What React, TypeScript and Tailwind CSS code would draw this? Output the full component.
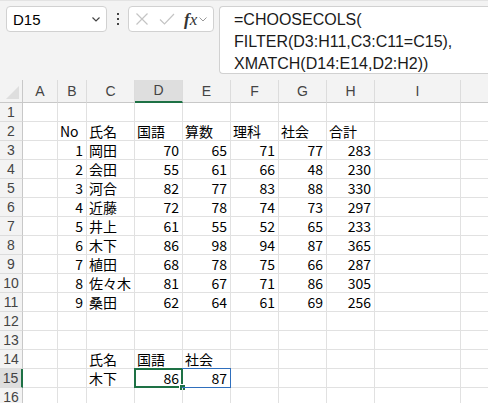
import React from "react";

const cols = ["A", "B", "C", "D", "E", "F", "G", "H", "I", ""];
const widths = [35, 29, 48, 48, 48, 48, 48, 48, 86, 40];

type Cell = { v: string; a?: "l" | "r" };
const rows: Record<number, Record<number, Cell>> = {};
const data: [string, string, number, number, number, number, number][] = [
  ["1", "岡田", 70, 65, 71, 77, 283],
  ["2", "会田", 55, 61, 66, 48, 230],
  ["3", "河合", 82, 77, 83, 88, 330],
  ["4", "近藤", 72, 78, 74, 73, 297],
  ["5", "井上", 61, 55, 52, 65, 233],
  ["6", "木下", 86, 98, 94, 87, 365],
  ["7", "植田", 68, 78, 75, 66, 287],
  ["8", "佐々木", 81, 67, 71, 86, 305],
  ["9", "桑田", 62, 64, 61, 69, 256],
];
rows[2] = {
  1: { v: "No" },
  2: { v: "氏名" },
  3: { v: "国語" },
  4: { v: "算数" },
  5: { v: "理科" },
  6: { v: "社会" },
  7: { v: "合計" },
};
data.forEach((d, i) => {
  rows[3 + i] = {
    1: { v: d[0], a: "r" },
    2: { v: d[1] },
    3: { v: String(d[2]), a: "r" },
    4: { v: String(d[3]), a: "r" },
    5: { v: String(d[4]), a: "r" },
    6: { v: String(d[5]), a: "r" },
    7: { v: String(d[6]), a: "r" },
  };
});
rows[14] = { 2: { v: "氏名" }, 3: { v: "国語" }, 4: { v: "社会" } };
rows[15] = { 2: { v: "木下" }, 3: { v: "86", a: "r" }, 4: { v: "87", a: "r" } };

const font = { fontFamily: '"Noto Sans CJK JP", "Liberation Sans", sans-serif' };

export default function App() {
  return (
    <div
      className="w-[488px] h-[403px] overflow-hidden bg-[#f3f3f3] text-black"
      style={font}
    >
      {/* formula bar */}
      <div className="h-[80px] border-t border-[#e3e3e3] flex items-start pt-[5px] pl-[6px] gap-0">
        <div className="w-[101px] h-[26px] bg-white border border-[#d1d1d1] rounded-[4px] flex items-center justify-between pl-[6px] pr-[4px]">
          <span className="text-[15px] leading-none" style={{ fontFamily: '"Liberation Sans", sans-serif' }}>D15</span>
          <svg width="12" height="12" viewBox="0 0 12 12">
            <path d="M2.5 4.5 L6 8 L9.5 4.5" fill="none" stroke="#444" strokeWidth="1.2" />
          </svg>
        </div>
        <div className="w-[21px] h-[26px] flex flex-col items-center justify-center gap-[3px]">
          <div className="w-[2px] h-[2px] bg-[#444]" />
          <div className="w-[2px] h-[2px] bg-[#444]" />
          <div className="w-[2px] h-[2px] bg-[#444]" />
        </div>
        <div className="w-[86px] h-[26px] bg-white border border-[#d1d1d1] rounded-[4px] flex items-center pl-[6px]">
          <svg width="14" height="14" viewBox="0 0 14 14">
            <path d="M1.5 1.5 L12.5 12.5 M12.5 1.5 L1.5 12.5" stroke="#c4c4c4" strokeWidth="1.2" />
          </svg>
          <svg width="16" height="14" viewBox="0 0 16 14" className="ml-[10px]">
            <path d="M1 7.5 L5.5 12 L15 2" fill="none" stroke="#c4c4c4" strokeWidth="1.2" />
          </svg>
          <span
            className="ml-[9px] text-[17px] italic leading-none text-[#333]"
            style={{ fontFamily: '"Liberation Serif", serif' }}
          >
            <span className="font-bold">f</span>x
          </span>
          <svg width="10" height="10" viewBox="0 0 10 10" className="ml-[1px]">
            <path d="M1.5 3.5 L5 7 L8.5 3.5" fill="none" stroke="#999" strokeWidth="1" />
          </svg>
        </div>
        <div
          className="ml-[5px] flex-1 h-[68px] bg-white border border-[#d1d1d1] rounded-l-[4px] border-r-0 pl-[14px] pt-[2px] text-[16px] leading-[22px] text-[#1a1a1a]"
          style={{ fontFamily: '"Liberation Sans", sans-serif' }}
        >
          <div>=CHOOSECOLS(</div>
          <div>FILTER(D3:H11,C3:C11=C15),</div>
          <div>XMATCH(D14:E14,D2:H2))</div>
        </div>
      </div>

      {/* grid */}
      <div
        className="grid bg-white"
        style={{
          gridTemplateColumns: `23px ${widths.map((w) => w + "px").join(" ")}`,
          gridTemplateRows: "23px repeat(16, 19px)",
        }}
      >
        {/* corner */}
        <div className="relative bg-[#f3f3f3] border-r border-b border-[#c8c8c8]">
          <div
            className="absolute right-[3px] bottom-[3px] w-0 h-0 border-l-[13px] border-l-transparent border-b-[13px] border-b-[#dedede]"
          />
        </div>
        {cols.map((c, i) => (
          <div
            key={c + i}
            className={
              "flex items-center justify-center text-[14px] text-[#444] border-r border-[#dcdcdc] " +
              (c === "D"
                ? "bg-[#dedede] border-b-2 border-b-[#1e7145]"
                : "bg-[#f3f3f3] border-b border-b-[#c8c8c8]")
            }
            style={{ fontFamily: '"Liberation Sans", sans-serif' }}
          >
            {c}
          </div>
        ))}
        {Array.from({ length: 16 }, (_, ri) => {
          const r = ri + 1;
          return (
            <React.Fragment key={r}>
              <div
                className={
                  "flex items-center justify-center text-[14px] text-[#444] border-b border-[#dcdcdc] " +
                  (r === 15
                    ? "bg-[#dedede] border-r-2 border-r-[#1e7145]"
                    : "bg-[#f3f3f3] border-r border-r-[#c8c8c8]")
                }
                style={{ fontFamily: '"Liberation Sans", sans-serif' }}
              >
                {r}
              </div>
              {widths.map((_, ci) => {
                const cell = rows[r]?.[ci];
                const active = r === 15 && ci === 3;
                const spill = r === 15 && ci === 4;
                return (
                  <div
                    key={ci}
                    className={
                      "relative border-r border-b border-[#e1e1e1] text-[14px] leading-none flex items-center whitespace-nowrap " +
                      (cell?.a === "r" ? "justify-end pr-[3px]" : "justify-start pl-[2px]")
                    }
                  >
                    {cell?.v}
                    {active && (
                      <>
                        <div className="absolute left-[-1px] top-[-1px] right-[-1px] bottom-[-1px] border-2 border-[#1e7145] pointer-events-none" />
                        <div className="absolute right-[-4px] bottom-[-4px] w-[7px] h-[7px] bg-[#1e7145] border border-white" />
                      </>
                    )}
                    {spill && (
                      <div className="absolute left-[-1px] top-[-1px] right-[-1px] bottom-[-1px] border border-l-0 border-[#2f6fbd] pointer-events-none" />
                    )}
                  </div>
                );
              })}
            </React.Fragment>
          );
        })}
      </div>
    </div>
  );
}
